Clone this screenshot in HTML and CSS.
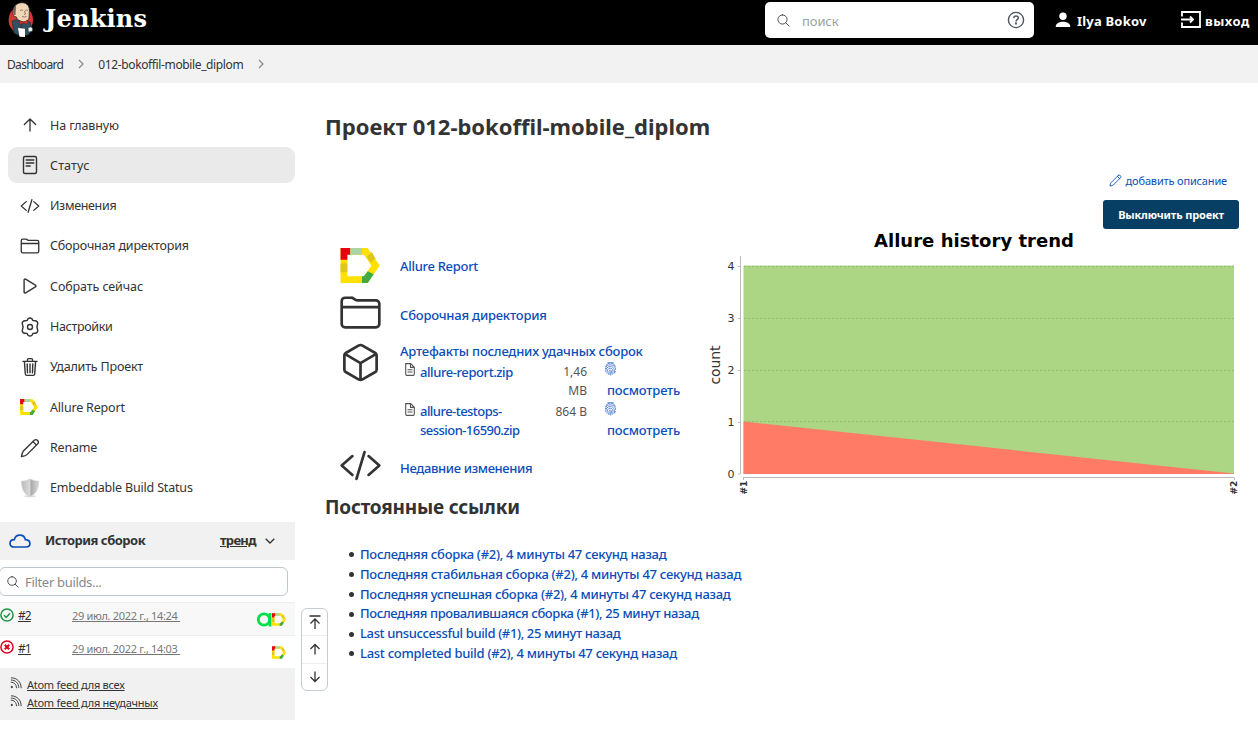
FILE: index.html
```html
<!DOCTYPE html>
<html lang="ru">
<head>
<meta charset="utf-8">
<title>012-bokoffil-mobile_diplom [Jenkins]</title>
<link rel="stylesheet" href="styles.css">
</head>
<body>
<svg class="defs" width="0" height="0">
  <defs>
    <symbol id="code" viewBox="0 0 512 512"><path d="M160 368L32 256l128-112M352 368l128-112-128-112M304 96l-96 320"/></symbol>
    <symbol id="folder" viewBox="0 0 512 512"><path d="M440 432H72a40 40 0 01-40-40V120a40 40 0 0140-40h75.900a40 40 0 0122.200 6.700l27.800 18.600a40 40 0 0022.200 6.700H440a40 40 0 0140 40v240a40 40 0 01-40 40zM32 192h448"/></symbol>
    <symbol id="up" viewBox="0 0 512 512"><path d="M112 244l144-144 144 144M256 120v292"/></symbol>
    <symbol id="search" viewBox="0 0 512 512"><path d="M221.090 64a157.090 157.090 0 10157.090 157.090A157.100 157.100 0 00221.090 64zM338.290 338.290L448 448"/></symbol>
    <symbol id="pencil" viewBox="0 0 512 512"><path d="M364 57L87 334C62 359 48 420 37 475c55-11 116-25 141-50l277-277c48-60-31-139-91-91zM329 92l91 91"/></symbol>
    <symbol id="feed" viewBox="0 0 12 12"><circle cx="1.800" cy="10" r=".7" fill="currentColor"/><path d="M.8 5.200c3.300 0 5.700 2.300 5.700 6M1 .800C7 .8 11.200 5 11.200 11.200M.8 3c4.700 0 8 3.200 8 8"/></symbol>
    <symbol id="doc" viewBox="0 0 10 13"><path d="M.7.600h5l3.600 3.700v7a1.100 1.100 0 01-1.100 1.100H1.800A1.100 1.100 0 01.7 11.300zM5.500.700v3.700h3.700M2.500 6.700h5M2.500 9h5"/></symbol>
    <symbol id="finger" viewBox="0 0 12 14"><path d="M1 4.500Q2.300 1 6 1t5.100 3.600M.8 7.200C1.200 4.400 3 2.800 6 2.800s4.900 2 5.200 5M1.200 10c0-3.300 1.500-5.500 4.700-5.500 3.400 0 4.400 3 3.900 7M2.500 11.500c.3-3 .5-5.300 3.400-5.300 2.800 0 2.800 3.400 2.200 6.400M4 12.600C4.700 9.700 4.300 8 6 8s.9 3 .1 5.500M6 9.500L5.300 13M2.800.9C4.800 0 7.400 0 9.300 1M10.300 10.800l.6-2"/></symbol>
    <symbol id="allure" viewBox="0 0 40 36"><path d="M3.500 11V3.500H26L36 18 26 32.500H3.500V10" fill="none" stroke="#ffe000" stroke-width="7"/><path d="M0 0h10v7H7v5H0z" fill="#e60012"/><path d="M10 0h12v7H10z" fill="#a8d5a2"/><path d="M27 9l5-5 4 7-5 4zM0 16h7v9H0z" fill="#dfc61a"/><path d="M22 29h2l4-5 6 3-6 9h-6z" fill="#3bac46"/></symbol>
  </defs>
</svg>

<header class="header">
  <a class="logo">
    <svg class="butler" viewBox="0 0 26 36">
      <ellipse cx="12.800" cy="18" rx="12.200" ry="13.500" fill="#d33833"/>
      <path d="M5.500 14C3.500 6 8 .6 14 .7c5.500 0 8 4.500 7.300 9.300L21 16c-.6 3-4 4.500-7 3.500-3-.7-5-2-5.500-4.500z" fill="#f0d6b7" stroke="#2a2320" stroke-width=".7"/>
      <path d="M5.800 13C4.500 8 6 3.500 8.500 2.200 7.500 5 8.200 7 7.700 9l-.2 4z" fill="#6b6460"/>
      <path d="M12 8.500q2-1.200 3 0M17 8.500q2-1.200 3 0M16.500 9l1 3-1.500.4M14 14.500q2.500 1 4.500 0" fill="none" stroke="#6b5346" stroke-width=".7"/>
      <path d="M4 19l5-1.500L14 22l5-3 3 1 2.500 9-2 1-2.500 3-8 1-6-3z" fill="#335061" stroke="#182b36" stroke-width=".6"/>
      <path d="M12.500 20l4.500 13-5 .5z" fill="#27404f"/>
      <path d="M11.500 18.500l4 2 4-2.500v4l-4-1-3.500 1.500z" fill="#d33833" stroke="#81191d" stroke-width=".5"/>
      <path d="M10 26l7 .7v8.300l-5.500-.3z" fill="#fff"/>
      <path d="M20 26q3-2 4.500 0v3l-4 1z" fill="#e9eef0" stroke="#222" stroke-width=".4"/>
    </svg>
    <span class="wordmark">Jenkins</span>
  </a>
  <div class="search">
    <svg class="ico search-ico"><use href="#search"/></svg>
    <span class="search-hint">поиск</span>
    <svg class="help" viewBox="0 0 18 18"><circle cx="9" cy="9" r="7.600"/><path d="M6.700 7.100C6.800 5.600 7.700 5 9 5s2.300.7 2.300 1.900c0 1.700-2.300 1.800-2.300 3.500"/><circle cx="9" cy="12.500" r=".45"/></svg>
  </div>
  <a class="user"><svg viewBox="0 0 16 16"><circle cx="8" cy="4.200" r="3.700"/><path d="M.7 15c0-3.700 3.500-5.200 7.300-5.200s7.300 1.500 7.300 5.200z"/></svg><span>Ilya Bokov</span></a>
  <a class="logout"><svg viewBox="0 0 20 17"><path d="M1 5.500V1h18v15H1v-4.500M0 8.500h12M9 5.500l3 3-3 3"/></svg><span>выход</span></a>
</header>

<nav class="crumbs">
  <a class="crumb-a">Dashboard</a>
  <svg class="chev" viewBox="0 0 6 10"><path d="M1 1l4 4-4 4"/></svg>
  <a class="crumb-b">012-bokoffil-mobile_diplom</a>
  <svg class="chev" viewBox="0 0 6 10"><path d="M1 1l4 4-4 4"/></svg>
</nav>

<div class="page">
  <aside class="side">
    <div class="tasks">
      <a class="task t1"><svg class="ico"><use href="#up"/></svg><span>На главную</span></a>
      <a class="task t2 active"><svg class="ico" viewBox="0 0 20 20"><path d="M5 1.500h10a1.500 1.500 0 011.500 1.500v14a1.500 1.500 0 01-1.500 1.500H5A1.500 1.500 0 013.500 17V3A1.500 1.500 0 015 1.500zM6.200 5h7.600M6.200 8h7.600M6.200 11h4"/></svg><span>Статус</span></a>
      <a class="task t3"><svg class="ico"><use href="#code"/></svg><span>Изменения</span></a>
      <a class="task t4"><svg class="ico"><use href="#folder"/></svg><span>Сборочная директория</span></a>
      <a class="task t5"><svg class="ico" viewBox="0 0 20 20"><path d="M4.100 4.100v11.800a1 1 0 001.500.9l9.800-5.900a1 1 0 000-1.800L5.600 3.200a1 1 0 00-1.500.9z"/></svg><span>Собрать сейчас</span></a>
      <a class="task t6"><svg class="ico" viewBox="0 0 20 20"><circle cx="10" cy="10" r="2.500"/><path d="M8 1.800q2-1.500 4 0l1 1.800 2.100.2q2.500.2 2.700 2.600L16.900 10l.9 3.600q-.2 2.400-2.700 2.600l-2.100.2-1 1.800q-2 1.500-4 0l-1-1.800-2.100-.2q-2.500-.2-2.700-2.600L3.100 10l-.9-3.600q.2-2.400 2.700-2.600L7 3.600z"/></svg><span>Настройки</span></a>
      <a class="task t7"><svg class="ico" viewBox="0 0 20 20"><path d="M4.400 4.400l.9 12.500a1.700 1.700 0 001.600 1.500h6.200a1.700 1.700 0 001.600-1.500l.9-12.500M3 4.400h14M7.500 4.400V2.600a1 1 0 011-1h3a1 1 0 011 1v1.800M10 7v8.800M7.200 7l.3 8.800M12.800 7l-.3 8.800"/></svg><span>Удалить Проект</span></a>
      <a class="task t8"><svg class="mini"><use href="#allure"/></svg><span>Allure Report</span></a>
      <a class="task t9"><svg class="ico"><use href="#pencil"/></svg><span>Rename</span></a>
      <a class="task t10"><svg class="shield" viewBox="0 0 20 20"><defs><linearGradient id="sg"><stop offset="0" stop-color="#bbb"/><stop offset=".5" stop-color="#dadada"/><stop offset=".55" stop-color="#aaa"/><stop offset="1" stop-color="#d7d7d7"/></linearGradient></defs><ellipse cx="10" cy="18.300" rx="6" ry="1" fill="#ddd"/><path d="M1.500 3.300Q6 3.300 10 1q4 2.300 8.500 2.300Q18.500 15.500 10 18.500 1.500 15.500 1.500 3.300z" fill="url(#sg)" stroke="#ccc" stroke-width=".7"/></svg><span>Embeddable Build Status</span></a>
    </div>

    <section class="history">
      <div class="hist-head">
        <svg class="cloud" viewBox="0 0 22 14"><path d="M5.200 5.700C6 2.800 8 1.100 10.800 1.100c3.100 0 5.100 2 5.600 4.600 2.700.2 4.500 1.500 4.500 3.800 0 2.200-1.700 3.500-4 3.500H5C2.700 13 1 11.600 1 9.400c0-2.100 1.700-3.600 4.200-3.700z"/></svg>
        <b class="hist-title">История сборок</b>
        <a class="trend">тренд</a>
        <svg class="down" viewBox="0 0 10 6"><path d="M.7.700L5 5 9.300.700"/></svg>
      </div>
      <div class="filter"><svg class="ico"><use href="#search"/></svg><span>Filter builds...</span></div>
      <div class="build odd">
        <svg class="ball ok" viewBox="0 0 14 14"><circle cx="7" cy="7" r="6.100"/><path d="M4 7.200l2.200 2.200L10 5.200"/></svg>
        <a class="num">#2</a><a class="date">29 июл. 2022 г., 14:24&nbsp;</a>
        <svg class="testops" viewBox="0 0 15 15"><circle cx="7" cy="7.500" r="5.700"/><path d="M13 1v13.500"/></svg>
        <svg class="badge"><use href="#allure"/></svg>
      </div>
      <div class="build">
        <svg class="ball bad" viewBox="0 0 14 14"><circle cx="7" cy="7" r="6.100"/><path d="M4.800 4.800l4.400 4.400M9.200 4.800L4.800 9.200"/></svg>
        <a class="num">#1</a><a class="date">29 июл. 2022 г., 14:03&nbsp;</a>
        <svg class="badge"><use href="#allure"/></svg>
      </div>
      <div class="feeds">
        <a><svg><use href="#feed"/></svg><span class="f1">Atom feed для всех</span></a>
        <a><svg><use href="#feed"/></svg><span class="f2">Atom feed для неудачных</span></a>
      </div>
      <div class="pager">
        <span><svg viewBox="0 0 14 14"><path d="M1.500 1h11M7 14V4M2.500 8.500L7 4l4.500 4.500"/></svg></span>
        <span><svg viewBox="0 0 14 14"><path d="M7 12.500v-10M2.500 7L7 2.500 11.500 7"/></svg></span>
        <span><svg viewBox="0 0 14 14"><path d="M7 1.500v10M2.500 7L7 11.500 11.500 7"/></svg></span>
      </div>
    </section>
  </aside>

  <main class="main">
    <h1>Проект 012-bokoffil-mobile_diplom</h1>
    <div class="actions">
      <a class="describe"><svg class="ico"><use href="#pencil"/></svg><span>добавить описание</span></a>
      <button class="disable">Выключить проект</button>
    </div>
    <div class="overview">
      <div class="links">
        <div class="row r1"><svg class="allure-big"><use href="#allure"/></svg><a class="l1">Allure Report</a></div>
        <div class="row r2"><svg class="big"><use href="#folder"/></svg><a class="l2">Сборочная директория</a></div>
        <div class="row r3">
          <svg class="big" viewBox="0 0 512 512"><path d="M448 341.370V170.610A32 32 0 00432.110 143l-152-88.460a47.940 47.940 0 00-48.240 0L79.890 143A32 32 0 0064 170.610v170.760A32 32 0 0079.890 369l152 88.460a48 48 0 0048.240 0l152-88.460A32 32 0 00448 341.370zM69 153.990l187 110 187-110M256 463.990v-200"/></svg>
          <div class="artifacts">
            <a class="l3">Артефакты последних удачных сборок</a>
            <div class="file"><svg class="doc"><use href="#doc"/></svg><a class="name n1">allure-report.zip</a><span class="size">1,46<br>MB</span><span class="view"><svg><use href="#finger"/></svg><a>посмотреть</a></span></div>
            <div class="file"><svg class="doc"><use href="#doc"/></svg><a class="name n2">allure-testops-<br>session-16590.zip</a><span class="size">864 B</span><span class="view"><svg><use href="#finger"/></svg><a>посмотреть</a></span></div>
          </div>
        </div>
        <div class="row r4"><svg class="big"><use href="#code"/></svg><a class="l4">Недавние изменения</a></div>
      </div>
      <svg class="chart" viewBox="0 0 558 270">
        <text class="c-title" x="174" y="22" textLength="200">Allure history trend</text>
        <path fill="#add684" d="M43.500 40.500H534V249H43.500z"/>
        <path fill="#ff7b66" d="M43.500 196.500L534 248.500V249H43.500z"/>
        <path class="grid" d="M44 41.500h490M44 93.500h490M44 145.500h490M44 196.500h490"/>
        <path class="axis" d="M40.500 31v218M38 41.500h2M38 93.500h2M38 145.500h2M38 197.500h2M38 249h2M43 252.500h491.500M43.500 253v2M534.500 253v2"/>
        <g class="c-num"><text x="27.500" y="45">4</text><text x="27.500" y="97">3</text><text x="27.500" y="149">2</text><text x="27.500" y="200.500">1</text><text x="27.500" y="252.500">0</text></g>
        <text class="c-count" transform="translate(20 159.500) rotate(-90)" textLength="39">count</text>
        <text class="c-build" transform="translate(46.500 269.500) rotate(-90)">#1</text>
        <text class="c-build" transform="translate(537 269.500) rotate(-90)">#2</text>
      </svg>
    </div>
    <h2>Постоянные ссылки</h2>
    <ul class="perma">
      <li><a class="p1">Последняя сборка (#2), 4 минуты 47 секунд назад</a></li>
      <li><a class="p2">Последняя стабильная сборка (#2), 4 минуты 47 секунд назад</a></li>
      <li><a class="p3">Последняя успешная сборка (#2), 4 минуты 47 секунд назад</a></li>
      <li><a class="p4">Последняя провалившаяся сборка (#1), 25 минут назад</a></li>
      <li><a class="p5">Last unsuccessful build (#1), 25 минут назад</a></li>
      <li><a class="p6">Last completed build (#2), 4 минуты 47 секунд назад</a></li>
    </ul>
  </main>
</div>
</body>
</html>
```

FILE: styles.css
```css
* { box-sizing: border-box; }
body { margin: 0; width: 1258px; height: 731px; overflow: hidden; background: #fff; color: #333; font: 13px/20px "Noto Sans", sans-serif; }
.defs { position: absolute; }
svg { display: block; flex: none; }
a, span, b { white-space: nowrap; }
.ico { width: 20px; height: 20px; fill: none; stroke: currentColor; stroke-width: 34px; stroke-linecap: round; stroke-linejoin: round; }
.ico[viewBox] { stroke-width: 1.4px; }

.header { height: 45px; background: #000; display: flex; color: #fff; font-weight: 700; }
.logo { display: flex; width: 765px; padding-left: 8px; }
.butler { width: 26px; height: 36px; margin-top: 2px; }
.wordmark { font: 700 24px/37px "DejaVu Serif", serif; margin-left: 11px; letter-spacing: .2px; }
.search { width: 269px; height: 36px; margin-top: 2px; border-radius: 5px; background: #fff; display: flex; align-items: center; padding: 0 9px 0 11px; }
.search-ico { width: 15px; height: 15px; color: #444; stroke-width: 32px; }
.search-hint { flex: 1; margin-left: 11px; padding-top: 2px; font-weight: 400; color: #9b9fa6; letter-spacing: -.1px; }
.help { width: 18px; height: 18px; fill: none; stroke: #4d545d; stroke-width: 1.4px; }
.user, .logout { display: flex; }
.user { margin-left: 21px; width: 126px; }
.user svg { width: 16px; height: 16px; margin-top: 12px; fill: #fff; }
.user span { margin: 11px 0 0 6px; letter-spacing: .2px; }
.logout svg { width: 20px; height: 17px; margin-top: 11px; fill: none; stroke: #fff; stroke-width: 1.8px; }
.logout span { margin: 11px 0 0 4px; letter-spacing: .5px; }

.crumbs { height: 38px; background: #f2f2f2; display: flex; align-items: center; font-size: 12px; padding-left: 7px; }
.crumbs a { padding-top: 2px; }
.crumb-a { letter-spacing: -.65px; }
.crumb-b { letter-spacing: -.37px; }
.chev { width: 6px; height: 10px; margin: 0 14px 0 15px; fill: none; stroke: #888; stroke-width: 1.2px; }

.page { display: flex; height: 648px; }
.side { width: 295px; flex: none; padding-top: 24px; }
.tasks { height: 415px; padding-left: 8px; display: flex; flex-direction: column; gap: 4.34px; }
.task { height: 36px; flex: none; display: flex; align-items: center; padding-left: 12px; border-radius: 9px; letter-spacing: -.18px; }
.task span { margin-left: 10px; font-size: 12.5px; padding-top: 1px; }
.t2 { letter-spacing: .15px; }
.t3, .t6 { letter-spacing: -.33px; }
.t1, .t5 { letter-spacing: -.1px; }
.active { background: #eaeaea; }
.mini { width: 18px; height: 16px; margin-right: 2px; }
.shield { width: 20px; height: 20px; }

.history { position: relative; }
.hist-head { height: 38px; background: #f1f1f1; display: flex; align-items: center; padding-left: 9px; }
.hist-head b, .hist-head a { padding-bottom: 2px; }
.cloud { width: 22px; height: 14px; fill: none; stroke: #0b4db8; stroke-width: 1.7px; }
.hist-title { width: 175px; margin-left: 14px; letter-spacing: -.5px; }
.trend { width: 36px; font-weight: 700; text-decoration: underline; letter-spacing: -.7px; }
.down { width: 10px; height: 6px; margin-left: 9px; fill: none; stroke: #333; stroke-width: 1.3px; }
.filter { margin: 7px 0 6px -1px; width: 289px; height: 29px; border: 1px solid #bfc6cd; border-radius: 6px; display: flex; align-items: center; padding-left: 6px; color: #888; letter-spacing: -.32px; }
.filter .ico { width: 14px; height: 14px; color: #444; margin-right: 5px; }
.build { height: 33px; display: flex; border-top: 1px solid #eee; padding-right: 9px; }
.odd { background: #f8f8f8; }
.ball { width: 14px; height: 14px; margin-top: 5px; fill: none; stroke-width: 1.5px; }
.build:not(.odd) .ball { margin-top: 4px; }
.ok { stroke: #1e9345; }
.bad { stroke: #e6001f; }
.bad path { stroke-width: 2.200px; }
.num { margin: 4px 0 0 4px; width: 54px; font-size: 12px; line-height: 18px; text-decoration: underline; letter-spacing: -.9px; }
.date { margin-top: 3px; flex: 1; font-size: 11px; line-height: 19px; color: #777; text-decoration: underline; letter-spacing: -.32px; }
.testops { width: 15px; height: 15px; margin-top: 9px; fill: none; stroke: #00e04b; stroke-width: 2.800px; }
.badge { width: 14px; height: 13px; margin-top: 10px; }
.feeds { height: 52px; background: #f1f1f1; padding: 8px 0 0 10px; }
.feeds a { height: 18px; display: flex; font-size: 11px; line-height: 17px; letter-spacing: -.26px; }
.feeds svg { width: 12px; height: 12px; margin: 1px 5px 0 0; fill: none; stroke: currentColor; stroke-width: .9px; }
.feeds span { text-decoration: underline; }
.pager { position: absolute; left: 301px; top: 86px; width: 27px; height: 83px; border: 1px solid #c6cdd2; border-radius: 6px; background: #fff; display: flex; flex-direction: column; }
.pager span { flex: 1; display: flex; align-items: center; justify-content: center; }
.pager span + span { border-top: 1px solid #eee; }
.pager svg { width: 14px; height: 14px; fill: none; stroke: #333; stroke-width: 1.3px; }

.main { width: 963px; padding: 28px 0 0 30px; }
h1 { margin: 0; font-size: 22px; line-height: 30px; height: 60px; white-space: nowrap; }
.actions { display: flex; flex-direction: column; align-items: flex-end; padding-right: 19px; height: 57px; }
.describe { display: flex; font-size: 11px; padding-right: 12px; color: #0b4db8; letter-spacing: -.16px; }
.describe .ico { width: 13px; height: 13px; margin: 3px 4px 0 0; }
.describe span { line-height: 19px; }
.disable { margin: 10px 0 0; width: 136px; height: 29px; flex: none; border: 0; border-radius: 3px; background: #063f63; color: #fff; font: 700 11px "Noto Sans", sans-serif; padding: 0; letter-spacing: -.18px; position: relative; }
.overview { display: flex; height: 265px; }
.links { width: 375px; padding: 17px 0 0 15px; color: #0b4db8; font-weight: 500; }
.row { display: flex; }
.row > a { margin-left: 19px; }
.big { width: 43px; height: 43px; margin: 0 -1px; fill: none; stroke: #333; stroke-width: 32px; stroke-linecap: round; stroke-linejoin: round; }
.allure-big { width: 40px; height: 35px; margin: 3px 1px 0 0; }
.r1 { height: 46px; }
.r1 > a { margin-top: 11px; }
.r2 { height: 51px; }
.r2 > a { margin-top: 14px; }
.r3 { height: 105px; }
.r3 .big { margin-top: -1px; }
.artifacts { margin: -1px 0 0 19px; width: 285px; }
.artifacts .l3 { display: block; height: 21px; }
.file { display: flex; height: 39.500px; line-height: 19.500px; }
.doc { width: 10px; height: 13px; margin: 1px 6px 0 5px; fill: none; stroke: #555; stroke-width: 1.1px; }
.name { margin-left: -1px; width: 117px; }
.n1 { padding-top: 1px; }
.size { width: 50px; padding-top: 1px; text-align: right; font-size: 12px; font-weight: 400; color: #555; line-height: 18.500px; }
.view { position: relative; width: 80px; margin-left: 17px; }
.view svg { width: 13px; height: 14px; fill: none; stroke: #3f75cd; stroke-width: .8px; }
.view a { display: block; margin: 5px 0 0 3px; letter-spacing: -.2px; }
.r4 .big { margin-top: -3px; }
.r4 > a { margin-top: 11px; }
.l1 { letter-spacing: -.3px; }
.l2, .l3 { letter-spacing: -.2px; }
.l4 { letter-spacing: -.35px; }
.n1 { letter-spacing: -.42px; }
.n2 { letter-spacing: -.54px; }
.chart { width: 558px; height: 270px; margin-top: -3px; }
.chart text { font-family: "DejaVu Sans", sans-serif; fill: #333; }
.chart .c-title { font-size: 18px; font-weight: 700; fill: #000; }
.c-num { font-size: 11px; }
.c-count { font-size: 14px; }
.c-build { font-size: 9px; font-weight: 700; }
.grid { fill: none; stroke: #96bb73; stroke-dasharray: 2 2; }
.axis { fill: none; stroke: #bbb; }
h2 { margin: 1px 0 24px; font-size: 19px; line-height: 26px; letter-spacing: -.2px; }
.perma { margin: 0; padding: 0 0 0 24px; font-weight: 500; list-style: none; letter-spacing: -.28px; }
.perma li { height: 19.800px; line-height: 20px; display: flex; align-items: center; }
.perma li::before { content: ""; width: 5px; height: 5px; margin: 2px 6px 0 0; border-radius: 50%; background: #333; }
.perma a { color: #0b4db8; }
.p4, .p5 { letter-spacing: -.37px; }
```
